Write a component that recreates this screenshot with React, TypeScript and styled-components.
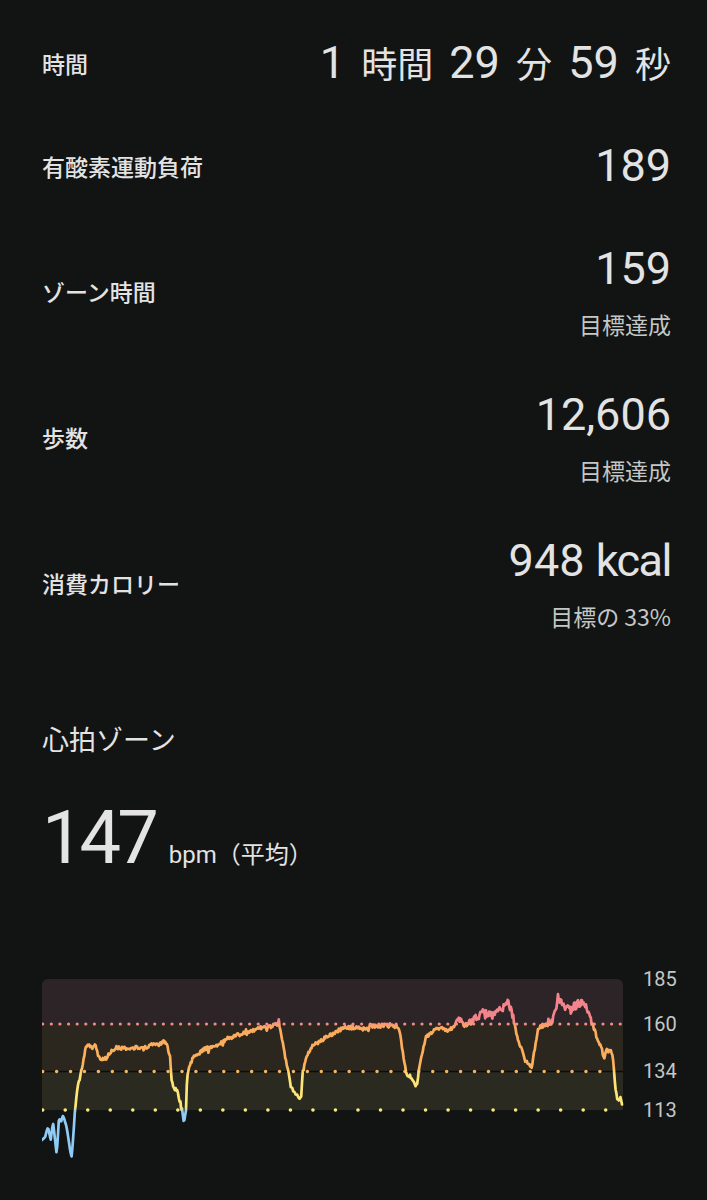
import React from "react";
import styled, { createGlobalStyle } from "styled-components";

const GlobalStyle = createGlobalStyle`
  html, body {
    margin: 0;
    background: #111413;
  }
  body {
    font-family: Roboto, "Noto Sans CJK JP", sans-serif;
    color: #e3e3e3;
  }
`;

const Page = styled.div`
  width: 707px;
  min-height: 1200px;
  box-sizing: border-box;
  padding: 34px 36px 0 42px;
`;

const StatList = styled.div`
  display: flex;
  flex-direction: column;
  gap: 47px;
`;

const Row = styled.div`
  display: flex;
  justify-content: space-between;
  align-items: center;
`;

const Label = styled.div`
  font-family: "Noto Sans CJK JP", sans-serif;
  font-weight: 500;
  font-size: 23px;
  line-height: 32px;
`;

const ValueBlock = styled.div`
  display: flex;
  flex-direction: column;
  align-items: flex-end;
`;

const Value = styled.div`
  font-size: 45px;
  line-height: 56px;
  white-space: pre;
`;

const Kanji = styled.span<{ $last?: boolean }>`
  font-family: "Noto Sans CJK JP", sans-serif;
  font-size: 36px;
  margin-left: 5px;
  margin-right: ${(p) => (p.$last ? 0 : 5)}px;
`;

const Unit = styled.span`
  letter-spacing: -1.5px;
`;

const Note = styled.div`
  margin-top: 11px;
  font-family: "Noto Sans CJK JP", sans-serif;
  font-size: 23px;
  line-height: 32px;
  color: #c4c7c5;
`;

const ZoneSection = styled.section`
  margin-top: 87px;
`;

const ZoneTitle = styled.h2`
  margin: 0;
  font-family: "Noto Sans CJK JP", sans-serif;
  font-weight: 400;
  font-size: 27px;
  line-height: 40px;
`;

const AvgRow = styled.div`
  display: flex;
  align-items: baseline;
  height: 75px;
  margin-top: 41px;
  line-height: 75px;
`;

const AvgValue = styled.span`
  font-size: 74px;
  letter-spacing: -4px;
`;

const AvgUnit = styled.span`
  margin-left: 14px;
  font-size: 24px;
  line-height: 1;
`;

const ChartWrap = styled.div`
  margin-top: 85px;
  margin-right: -36px;
`;

const AxisText = styled.text`
  font-family: Roboto, sans-serif;
  font-size: 20px;
  fill: #c4c7c5;
`;

// page coords -> svg coords: x - 42, y - 960
const OX = 42;
const OY = 960;

const keys: [number, number][] = [
  [42, 1140], [45, 1137], [48, 1127], [50.7, 1140], [53, 1122], [56.7, 1155],
  [59, 1118], [61, 1122], [63, 1115], [66, 1125], [68, 1135], [70, 1150],
  [71.7, 1157], [73, 1140], [75, 1110], [76.7, 1093], [80, 1077], [83, 1063],
  [85, 1050], [88, 1045], [92, 1048], [95, 1045], [98, 1055], [101.7, 1060],
  [106, 1058], [110, 1053], [115, 1048], [123, 1048], [130, 1050], [136.7, 1047],
  [143, 1049], [150, 1045], [157, 1045], [163, 1042], [166.7, 1043], [170, 1057],
  [171.7, 1080], [173, 1087], [176.7, 1090], [179, 1098], [181.7, 1107],
  [183, 1117], [184, 1122], [186, 1110], [187, 1080], [189, 1067], [193, 1058],
  [203, 1050], [216.7, 1045], [230, 1038], [243, 1033], [260, 1028], [270, 1027],
  [279, 1023], [284, 1050], [291, 1087], [298, 1097], [301, 1100], [303, 1067],
  [311, 1047], [325, 1038], [343, 1028], [352, 1027], [369, 1030], [370, 1026],
  [392, 1025], [399, 1028], [406, 1073], [412, 1078], [417, 1087], [419, 1067],
  [426, 1037], [437, 1028], [450, 1030], [460, 1020], [466.7, 1025], [475, 1018],
  [483, 1013], [493, 1015], [500, 1010], [508, 1003], [511.7, 1013], [515, 1025],
  [516.7, 1035], [521.7, 1050], [525, 1060], [530, 1065], [531.7, 1068],
  [535, 1047], [538, 1028], [545, 1025], [553, 1020], [556.7, 1007], [558, 997],
  [561.7, 1003], [565, 1008], [573, 1007], [581.7, 1002], [585, 1003], [588, 1013],
  [593, 1025], [596.7, 1037], [601.7, 1048], [604, 1060], [606.7, 1050],
  [611.7, 1052], [613, 1057], [615, 1083], [616.7, 1097], [619, 1100],
  [620.5, 1098], [622.7, 1110],
];

const mulberry32 = (seed: number) => {
  let a = seed;
  return () => {
    a |= 0;
    a = (a + 0x6d2b79f5) | 0;
    let t = Math.imul(a ^ (a >>> 15), 1 | a);
    t = (t + Math.imul(t ^ (t >>> 7), 61 | t)) ^ t;
    return ((t ^ (t >>> 14)) >>> 0) / 4294967296;
  };
};

const interp = (x: number) => {
  for (let i = 1; i < keys.length; i++) {
    if (x <= keys[i][0]) {
      const [x0, y0] = keys[i - 1];
      const [x1, y1] = keys[i];
      const t = (x - x0) / (x1 - x0);
      return y0 + (y1 - y0) * t;
    }
  }
  return keys[keys.length - 1][1];
};

const buildLine = () => {
  const r = mulberry32(11);
  const pts: string[] = [];
  for (let x = 42; x <= 622.7; x += 0.8) {
    const base = interp(x);
    let amp = 1.8;
    if (x < 75) amp = 0.6;
    else if (base < 1024) amp = 3.8;
    let y = base + (r() - 0.5) * amp * 2;
    if (x > 80 && r() < 0.04) y += (r() - 0.35) * 9;
    pts.push(`${(x - OX).toFixed(1)},${(y - OY).toFixed(1)}`);
  }
  return "M" + pts.join(" L");
};

const linePath = buildLine();

const dots = (start: number, end: number, step: number) => {
  const xs: number[] = [];
  for (let x = start; x <= end + 0.5; x += step) xs.push(x);
  return xs;
};

const zones = [
  { y: 979, h: 45, fill: "#2d2427" },
  { y: 1024, h: 47, fill: "#2b271f" },
  { y: 1071, h: 39, fill: "#2a2a20" },
];

const axis = [
  { v: "185", y: 979 },
  { v: "160", y: 1024 },
  { v: "134", y: 1071 },
  { v: "113", y: 1110 },
];

const HeartChart = () => {
  const plotW = 581;
  const gy = (py: number) => py - OY;
  return (
    <svg width={665} height={210} viewBox="0 0 665 210">
      <defs>
        <linearGradient id="hrLine" gradientUnits="userSpaceOnUse" x1="0" y1="0" x2="0" y2="210">
          <stop offset={60 / 210} stopColor="#f4848c" />
          <stop offset={68 / 210} stopColor="#fbab5e" />
          <stop offset={106 / 210} stopColor="#fbb25c" />
          <stop offset={116 / 210} stopColor="#fde474" />
          <stop offset={147 / 210} stopColor="#fde878" />
          <stop offset={152 / 210} stopColor="#8ecbf5" />
        </linearGradient>
        <clipPath id="plotTop">
          <rect x="0" y={gy(979)} width={plotW} height={140} rx="6" />
        </clipPath>
      </defs>
      <g clipPath="url(#plotTop)">
        {zones.map((z) => (
          <rect key={z.y} x="0" y={gy(z.y)} width={plotW} height={z.h} fill={z.fill} />
        ))}
      </g>
      <line x1="0" x2={plotW} y1={gy(1071.5)} y2={gy(1071.5)} stroke="#0b0c0c" strokeWidth="1.5" />
      {dots(0.7, 580, 8.62).map((x) => (
        <circle key={"p" + x} cx={x} cy={gy(1024)} r="1.6" fill="#f28b8e" />
      ))}
      {dots(0.7, 560, 13.93).map((x) => (
        <circle key={"o" + x} cx={x} cy={gy(1071.5)} r="1.7" fill="#f9b464" />
      ))}
      {dots(0.7, 565, 22.52).map((x) => (
        <circle key={"y" + x} cx={x} cy={gy(1110)} r="1.8" fill="#fbea7a" />
      ))}
      <path
        d={linePath}
        fill="none"
        stroke="url(#hrLine)"
        strokeWidth="2.7"
        strokeLinejoin="round"
        strokeLinecap="round"
      />
      {axis.map((a) => (
        <AxisText key={a.v} x={601} y={gy(a.y)} dominantBaseline="central">
          {a.v}
        </AxisText>
      ))}
    </svg>
  );
};

const App = () => {
  return (
    <Page>
      <GlobalStyle />
      <StatList>
        <Row>
          <Label>時間</Label>
          <ValueBlock>
            <Value>
              1 <Kanji>時間</Kanji> 29 <Kanji>分</Kanji> 59 <Kanji $last>秒</Kanji>
            </Value>
          </ValueBlock>
        </Row>
        <Row>
          <Label>有酸素運動負荷</Label>
          <ValueBlock>
            <Value>189</Value>
          </ValueBlock>
        </Row>
        <Row>
          <Label>ゾーン時間</Label>
          <ValueBlock>
            <Value>159</Value>
            <Note>目標達成</Note>
          </ValueBlock>
        </Row>
        <Row>
          <Label>歩数</Label>
          <ValueBlock>
            <Value>12,606</Value>
            <Note>目標達成</Note>
          </ValueBlock>
        </Row>
        <Row>
          <Label>消費カロリー</Label>
          <ValueBlock>
            <Value>
              948 <Unit>kcal</Unit>
            </Value>
            <Note>目標の 33%</Note>
          </ValueBlock>
        </Row>
      </StatList>
      <ZoneSection>
        <ZoneTitle>心拍ゾーン</ZoneTitle>
        <AvgRow>
          <AvgValue>147</AvgValue>
          <AvgUnit>bpm（平均）</AvgUnit>
        </AvgRow>
        <ChartWrap>
          <HeartChart />
        </ChartWrap>
      </ZoneSection>
    </Page>
  );
};

export default App;
